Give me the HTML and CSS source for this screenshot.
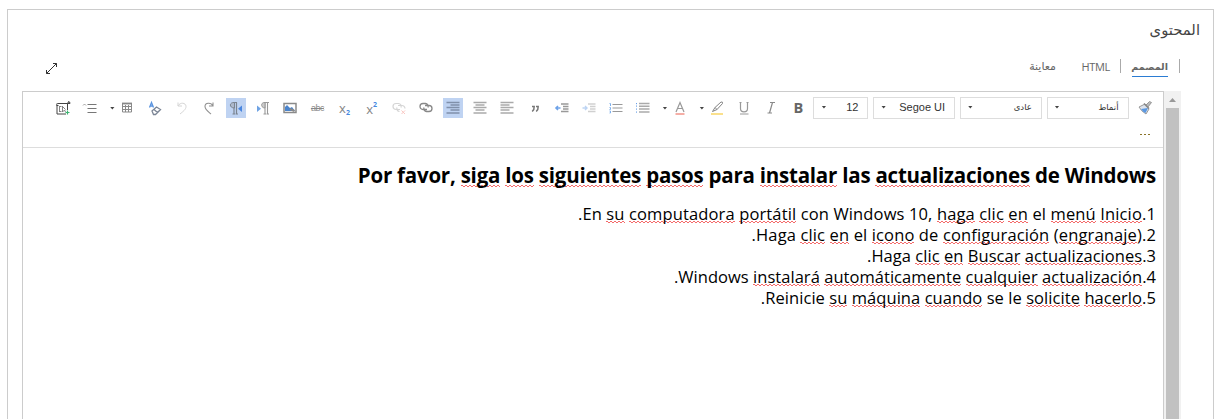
FILE: index.html
```
<!DOCTYPE html>
<html lang="ar">
<head>
<meta charset="utf-8">
<title>المحتوى</title>
<link rel="stylesheet" href="styles.css">
</head>
<body>
<main class="panel">
  <h1 class="title" dir="rtl">المحتوى</h1>
  <div class="tabs-row">
    <svg class="expand" width="13" height="13" viewBox="0 0 13 13"><path d="M1.500 11.500 11.500 1.500M8 1.500h3.500V5M1.500 8v3.500H5" fill="none" stroke="#333"/></svg>
    <nav class="tabs" dir="rtl">
      <span class="tab active">المصمم</span>
      <span class="tab html">HTML</span>
      <span class="tab preview">معاينة</span>
    </nav>
  </div>
  <section class="editor">
    <div class="main">
      <div class="toolbar">
        <div class="tools">
          <span class="tool"><svg viewBox="0 0 16 16"><path d="M2 4.500V14h9M1.500 4.500q0-1 1-1H12q1.500 0 1.500-2 1.500 0 1.500 2H12.500V10M1.500 5.500h2" stroke="#444"/><path d="M4 6.500h2.500M4 11.500h2.500M4.500 6.500v5M7.500 6v6l2-2 1 2M7.500 6.500l3 3" stroke="#777" stroke-width=".9"/><path d="M12.500 10.500v4M10.500 12.500h4" stroke="#3cb371" stroke-width="1.200"/></svg></span>
          <span class="tool menu"><svg viewBox="0 0 16 16"><path d="M5.500 4.500h9M5.500 8.500h9M5.500 12.500h9" stroke="#777"/><path d="M1 5.500 2.500 4 4 5.500" stroke="#888" stroke-width=".8"/></svg></span>
          <span class="split menu-split"><i class="caret"></i></span>
          <span class="tool"><svg viewBox="0 0 16 16"><path d="M3.500 3.500h9v8.500h-9zM6.500 5v7M9.500 5v7M3.500 6.500h9M3.500 9.500h9" stroke="#8a8a8a"/><path d="M3 3.500h10" stroke="#888" stroke-width="1.800"/></svg></span>
          <span class="tool"><svg viewBox="0 0 16 16"><path d="M2.500 7.500 4.500 2.500 6.500 7.500M3 6h3" stroke="#5a94e0" stroke-width="1.300"/><path d="M5 11 9.500 7l4 2.500-5 5H6.500zM7 9.500l3.500 3" stroke="#7b8595" stroke-width="1.300"/></svg></span>
          <span class="tool faded"><svg viewBox="0 0 16 16"><path d="M4 2.500V6h4M4 6c2-4 8-3.500 8 .5 0 3-3 5-6 7.500" stroke="#777"/></svg></span>
          <span class="tool"><svg viewBox="0 0 16 16"><path d="M12 2.500V6H8M12 6C10 2 4 2.500 4 6.500c0 3 3 5 6 7.500" stroke="#909090" stroke-width="1.100"/></svg></span>
          <span class="tool"><b class="pressed"><svg viewBox="0 0 16 16"><path d="M6 13.500V2.500H9M8.500 2.500V14M4.500 14H7M7.500 14H10" stroke="#7b8490" stroke-width="1.200"/><path d="M6.500 2.500C1 2 1 8 6.500 8z" fill="#adb8cb" stroke="#7b8490"/><path d="M14 5.500v6.500l-4-3.300z" fill="#4a86de" stroke="none"/></svg></b></span>
          <span class="tool"><svg viewBox="0 0 16 16"><path d="M10 14V2.500h4M12.500 2.500V14M8.500 14H11M11.500 14H14" stroke="#999" stroke-width="1.100"/><path d="M10 2.500C5.500 2 5.500 8 10 8z" fill="#ccc" stroke="#999"/><path d="M2 5.500V12l4-3.300z" fill="#6fa3e4" stroke="none"/></svg></span>
          <span class="tool"><svg viewBox="0 0 16 16"><path d="M2 3.500h12v9H2z" stroke="#8a8a8a" stroke-width="1.500"/><path d="M3 11V7l2-2 3 3 2-1 3 4z" fill="#4a84cc" stroke="none"/><path d="m8 9 4.500 2" stroke="#888" stroke-width="2"/></svg></span>
          <span class="tool"><span class="strike">abc</span></span>
          <span class="tool"><span class="script">x</span><span class="digit low">2</span></span>
          <span class="tool"><span class="script sup">x</span><span class="digit high">2</span></span>
          <span class="tool faded"><svg viewBox="0 0 16 16"><path d="M9 9.500H5A3 3 0 0 1 5 3.500h2.500a3 3 0 0 1 2.500 4M7 5.500h4a3 3 0 0 1 3 3M8.500 11.500a3 3 0 0 1-2.500-4" stroke="#777" stroke-width="1.200"/><path d="m10.500 10.500 3.500 3.500m0-3.500-3.500 3.500" stroke="#f04a38"/></svg></span>
          <span class="tool"><svg viewBox="0 0 16 16"><path d="M9 9.500H5A3 3 0 0 1 5 3.500h2.500a3 3 0 0 1 2.500 4M7 5.500h4a3 3 0 0 1 0 6H8.500a3 3 0 0 1-2.500-4" stroke="#888" stroke-width="1.300"/></svg></span>
          <span class="tool"><b class="pressed"><svg viewBox="0 0 16 16"><path d="M1.500 2.500h13M5.500 5h9M1.500 7.500h13M5.500 10h9M1.500 13h13" stroke="#8090aa" stroke-width="1.400"/></svg></b></span>
          <span class="tool"><svg viewBox="0 0 16 16"><path d="M1.500 2.500h13M3.500 5h9M1.500 7.500h13M3.500 10h9M1.500 13h13" stroke="#aaa" stroke-width="1.400"/></svg></span>
          <span class="tool"><svg viewBox="0 0 16 16"><path d="M1.500 2.500h13M1.500 5h9M1.500 7.500h13M1.500 10h9M1.500 13h13" stroke="#aaa" stroke-width="1.400"/></svg></span>
          <span class="tool"><svg viewBox="0 0 16 16"><path d="M5 6.500h2.200Q7.400 9.500 5.200 11.500M9 6.500h2.200Q11.400 9.500 9.200 11.500" stroke="#777" stroke-width="1.500"/></svg></span>
          <span class="tool"><svg viewBox="0 0 16 16"><path d="M1.500 8H6.500M4 6 2 8 4 10" stroke="#6ea2e8" stroke-width="1.600"/><path d="M7 4h7.500M9 6.500h5.500M9 9h5.500M7 11.500h7.500" stroke="#999" stroke-width="1.500"/></svg></span>
          <span class="tool dim"><svg viewBox="0 0 16 16"><path d="M1.500 8h4.500M4 6 6 8 4 10" stroke="#6ea2e8" stroke-width="1.400"/><path d="M7 4h7.500M9 6.500h5.500M9 9h5.500M7 11.500h7.500" stroke="#999" stroke-width="1.500"/></svg></span>
          <span class="tool"><svg viewBox="0 0 16 16"><path d="M4.500 4.500H14.500M4.500 8H14.500M4.500 11.500H14.500" stroke="#999" stroke-width="1.200"/><path d="M1.500 3.500h1v2.500M1.500 7.500h1v2H1.500M1.500 11h1v2H1.500" stroke="#7fb0ec"/></svg></span>
          <span class="tool"><svg viewBox="0 0 16 16"><path d="M4 3.500h10.500M4 6.200h10.500M4 9h10.500M4 12h10.500" stroke="#aaa" stroke-width="1.500"/><path d="M1.500 3v1.200M1.500 5.500v1.200M1.500 8.500v1.200M1.500 11.500v1.200" stroke="#69a0e8"/></svg></span>
          <span class="split"><i class="caret"></i></span>
          <span class="tool"><svg viewBox="0 0 16 16"><path d="M4 12 8 2.500 12 12M5.500 8.500h5" stroke="#999" stroke-width="1.200"/><path d="M3.500 14h9" stroke="#f4a59c" stroke-width="1.800"/></svg></span>
          <span class="split"><i class="caret"></i></span>
          <span class="tool"><svg viewBox="0 0 16 16"><path d="M3.500 11.500 6 7.500 12 2q2-.5 1.500 1.500L8 9.500zM6 7.500 8 9.500" stroke="#858585"/><path d="M2 14h12" stroke="#fae08c" stroke-width="2"/></svg></span>
          <span class="tool"><svg viewBox="0 0 16 16"><path d="M4.500 2v6.500c0 4.500 7 4.500 7 0V2M4 14h8.500M3.500 2.500h2M10.500 2.500h2" stroke="#999" stroke-width="1.200"/></svg></span>
          <span class="tool"><svg viewBox="0 0 16 16"><path d="M9.500 2.500 6.500 13M7 2.500h5M4.500 13h4.500" stroke="#8a8a8a" stroke-width="1.200"/></svg></span>
          <span class="tool"><span class="bold">B</span></span>
          <div class="selects">
            <span class="select size"><i class="caret"></i><span>12</span></span>
            <span class="select"><i class="caret"></i><span>Segoe UI</span></span>
            <span class="select"><i class="caret"></i><span class="arabic">عادى</span></span>
            <span class="select"><i class="caret"></i><span class="arabic">أنماط</span></span>
          </div>
          <span class="tool brush"><svg viewBox="0 0 16 16"><path d="m9 5 3.500-3.500 2 1L11 7z" fill="#bbb" stroke="#888" stroke-width=".8"/><path d="m2 7 6-3 4 5-3 5Q4 11 2 7z" fill="#dce3ed" stroke="#999"/><path d="m4 9 7-1-2.500 5Q6 12 4 9z" fill="#5a98e2" stroke="none"/><path d="m7 3.500 5 5" stroke="#888" stroke-width="1.500"/></svg></span>
        </div>
        <div class="more"><i></i><i></i><i></i></div>
      </div>
      <article class="content" dir="rtl" lang="es">
        <h2>Por favor, <u>siga</u> <u>los</u> <u>siguientes</u> <u>pasos</u> para <u>instalar</u> las <u>actualizaciones</u> de Windows</h2>
        <ol>
          <li class="wide"><span class="num">1.</span>En <u>su</u> <u>computadora</u> <u>portátil</u> con Windows 10, <u>haga</u> <u>clic</u> <u>en</u> el <u>menú</u> <u>Inicio</u>.</li>
          <li class="wide"><span class="num">2.</span>Haga <u>clic</u> <u>en</u> el <u>icono</u> de <u>configuración</u> (<u>engranaje</u>).</li>
          <li><span class="num">3.</span>Haga <u>clic</u> <u>en</u> <u>Buscar</u> <u>actualizaciones</u>.</li>
          <li><span class="num">4.</span>Windows <u>instalará</u> <u>automáticamente</u> <u>cualquier</u> <u>actualización</u>.</li>
          <li class="medium"><span class="num">5.</span>Reinicie <u>su</u> <u>máquina</u> <u>cuando</u> se le <u>solicite</u> <u>hacerlo</u>.</li>
        </ol>
      </article>
    </div>
    <div class="scrollbar"><i class="arrow"></i><div class="thumb"></div></div>
  </section>
</main>
</body>
</html>
```
FILE: styles.css
```
* { box-sizing: border-box; }
body { margin: 0; height: 419px; overflow: hidden; background: #fff; color: #000; font-family: "Open Sans", "Noto Sans", "DejaVu Sans", sans-serif; }
.panel { width: 1207px; height: 420px; margin: 9px 0 0 7px; border: 1px solid #ccc; border-bottom: 0; display: flex; flex-direction: column; }
.title { margin: 0; height: 45px; padding: 6px 13px 0 0; font-size: 14.800px; line-height: 26px; font-weight: 400; color: #444; }
.tabs-row { height: 36px; display: flex; justify-content: space-between; padding: 4px 33px 0 37px; }
.expand { display: block; margin-top: 3px; }
.tabs { display: flex; font-size: 11px; line-height: 15px; color: #666; }
.tab { height: 18px; white-space: nowrap; }
.tabs::before { content: ""; width: 1px; height: 14px; background: #aaa; margin-left: 11px; }
.active { width: 36px; border-bottom: 1px solid #2b7cd3; font-weight: 700; font-size: 9.600px; }
.html { width: 40px; height: 14px; margin-right: 11px; padding-right: 10px; border-right: 1px solid #aaa; letter-spacing: -.3px; }
.preview { margin-right: 25px; font-size: 11px; line-height: 13px; }
.editor { flex: 1; display: flex; margin: 0 32px 0 14px; }
.main { flex: 1; min-width: 0; border: 1px solid #ccc; border-bottom: 0; }
.toolbar { height: 56px; border-bottom: 1px solid #ddd; }
.tools { display: flex; align-items: center; padding: 5px 0 0 26.900px; height: 27px; }
.tool { flex: 0 0 27.150px; height: 20px; display: flex; align-items: center; justify-content: center; }
.tool svg { display: block; width: 16px; height: 16px; fill: none; }
.menu { flex-basis: 26px; }
.split { flex: 0 0 9.800px; display: flex; justify-content: flex-end; margin: 0 -1px 0 1px; }
.menu-split { margin: 0 -1px 0 2px; }
.caret { width: 5px; height: 3px; background: #444; clip-path: polygon(0 0, 100% 0, 50% 100%); }
.pressed { width: 20px; height: 20px; display: flex; align-items: center; justify-content: center; background: #bfd3f2; }
.faded { opacity: .3; }
.dim { opacity: .45; }
.strike { font: 9px/12px "Liberation Sans", sans-serif; color: #888; text-decoration: line-through; letter-spacing: -.5px; }
.script { font-size: 13px; line-height: 18px; color: #858585; }
.sup { padding-top: 2px; }
.digit { font-size: 7px; line-height: 8px; font-weight: 700; color: #4688e0; }
.low { margin-top: 9px; }
.high { margin-bottom: 6px; }
.bold { font-size: 14.500px; line-height: 20px; font-weight: 700; color: #666; }
.selects { display: flex; gap: 4.700px; padding-left: 1.500px; }
.select { width: 82px; height: 22px; border: 1px solid #ddd; display: flex; align-items: center; justify-content: space-between; padding: 0 9px 2px 7px; font: 11px/18px "Liberation Sans", "DejaVu Sans", sans-serif; color: #333; white-space: nowrap; }
.select.size { width: 55px; }
.arabic { font-size: 8.500px; }
.brush { margin-left: 3px; }
.more { display: flex; justify-content: flex-end; gap: 2px; padding: 15px 13px 0 0; }
.more i { width: 2px; height: 1px; background: #8a7328; }
.content { padding: 12px 7px 0 0; white-space: nowrap; }
h2 { margin: 0; font-size: 20.500px; line-height: 30px; font-weight: 700; letter-spacing: -.23px; }
ol { margin: 13px 0 0; padding: 0; list-style: none; font-size: 16.500px; }
li { height: 21px; line-height: 21px; letter-spacing: .04px; }
.wide { letter-spacing: .13px; }
.medium { letter-spacing: .06px; }
.num { display: inline-block; }
u { text-decoration: none; background-image: repeating-linear-gradient(90deg, #f46a6a 0 2px, #fff0 2px 4px), repeating-linear-gradient(90deg, #fff0 0 2px, #f46a6a 2px 4px); background-size: 100% 1px; background-repeat: no-repeat; background-position: 0 calc(100% - 3px), 0 calc(100% - 2px); }
.scrollbar { width: 17px; background: #f1f1f1; display: flex; flex-direction: column; align-items: center; }
.arrow { width: 7px; height: 4px; margin: 7px 0 6px; background: #999; clip-path: polygon(50% 0, 100% 100%, 0 100%); }
.thumb { width: 13px; flex: 1; background: #c1c1c1; }
```
